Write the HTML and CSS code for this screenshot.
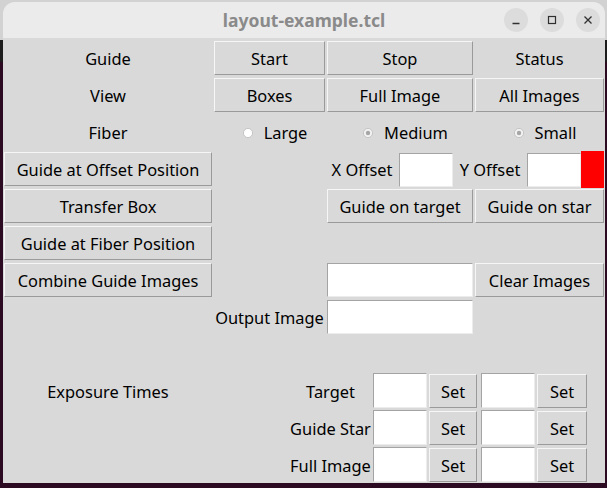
FILE: index.html
```html
<!DOCTYPE html>
<html>
<head>
<meta charset="utf-8">
<link rel="stylesheet" href="styles.css">
</head>
<body>
<div class="window">
  <div class="titlebar">
    <span></span>
    <span class="title">layout-example.tcl</span>
    <div class="controls">
      <span class="ctl"><svg width="12" height="12" viewBox="0 0 12 12"><path d="M2.5 9.5h7" stroke="#303030" stroke-width="1.3"/></svg></span>
      <span class="ctl"><svg width="12" height="12" viewBox="0 0 12 12"><rect x="2.5" y="2.5" width="7" height="7" fill="none" stroke="#303030" stroke-width="1.2"/></svg></span>
      <span class="ctl"><svg width="12" height="12" viewBox="0 0 12 12"><path d="M2.5 2.5l7 7M9.5 2.5l-7 7" stroke="#303030" stroke-width="1.3"/></svg></span>
    </div>
  </div>
  <div class="content">
    <div class="lbl">Guide</div>
    <button class="btn">Start</button>
    <button class="btn">Stop</button>
    <div class="lbl">Status</div>

    <div class="lbl">View</div>
    <button class="btn">Boxes</button>
    <button class="btn">Full Image</button>
    <button class="btn">All Images</button>

    <div class="lbl">Fiber</div>
    <div class="radio"><svg class="ind" width="12" height="12" viewBox="0 0 12 12"><circle cx="6" cy="6" r="4.6" fill="#ffffff" stroke="#c4c4c4" stroke-width="1"/></svg>Large</div>
    <div class="radio"><svg class="ind" width="12" height="12" viewBox="0 0 12 12"><circle cx="6" cy="6" r="4.6" fill="#f2f2f2" stroke="#c4c4c4" stroke-width="1"/><circle cx="6" cy="6" r="2.2" fill="#a6a6a6"/></svg>Medium</div>
    <div class="radio"><svg class="ind" width="12" height="12" viewBox="0 0 12 12"><circle cx="6" cy="6" r="4.6" fill="#f2f2f2" stroke="#c4c4c4" stroke-width="1"/><circle cx="6" cy="6" r="2.2" fill="#a6a6a6"/></svg>Small</div>

    <button class="btn">Guide at Offset Position</button>
    <div></div>
    <div class="offset">
      <div class="olbl">X Offset</div>
      <div class="entry oent"></div>
      <div class="olbl olbl2">Y Offset</div>
      <div class="entry oent"></div>
      <div class="red"></div>
    </div>

    <button class="btn">Transfer Box</button>
    <div></div>
    <button class="btn">Guide on target</button>
    <button class="btn">Guide on star</button>

    <button class="btn">Guide at Fiber Position</button>
    <div></div>
    <div></div>
    <div></div>

    <button class="btn">Combine Guide Images</button>
    <div></div>
    <div class="entry wide"></div>
    <button class="btn">Clear Images</button>

    <div></div>
    <div class="lbl">Output Image</div>
    <div class="entry wide"></div>
    <div></div>

    <div></div>
    <div></div>
    <div></div>
    <div></div>

    <div class="lbl">Exposure Times</div>
    <div class="expo">
      <div class="lbl">Target</div>
      <div class="entry small"></div>
      <button class="btn set">Set</button>
      <div class="entry small"></div>
      <button class="btn set2">Set</button>

      <div class="lbl">Guide Star</div>
      <div class="entry small"></div>
      <button class="btn set">Set</button>
      <div class="entry small"></div>
      <button class="btn set2">Set</button>

      <div class="lbl">Full Image</div>
      <div class="entry small"></div>
      <button class="btn set">Set</button>
      <div class="entry small"></div>
      <button class="btn set2">Set</button>
    </div>
  </div>
</div>
</body>
</html>
```

FILE: styles.css
```css
html, body {
  margin: 0;
  padding: 0;
}
body {
  width: 607px;
  height: 488px;
  overflow: hidden;
  background: linear-gradient(to bottom, #d2d2d2 0, #d2d2d2 40px, #1d1d1d 40px, #1d1d1d 62px, #2c0a22 62px);
  font-family: "Noto Sans", "Open Sans", sans-serif;
  font-size: 16.4px;
  color: #000;
}
.window {
  margin: 2px 0 0 3px;
  width: 602px;
  height: 481px;
  border-radius: 12px 12px 0 0;
  overflow: hidden;
  background: #d9d9d9;
}
.titlebar {
  height: 36px;
  background: #ebebeb;
  display: grid;
  grid-template-columns: 1fr auto 1fr;
  align-items: center;
}
.title {
  font-weight: 700;
  font-size: 17.5px;
  color: #8a8a8a;
}
.controls {
  justify-self: end;
  display: flex;
  gap: 12px;
  padding-right: 5px;
}
.ctl {
  width: 24px;
  height: 24px;
  border-radius: 50%;
  background: #dcdcdc;
  display: flex;
  align-items: center;
  justify-content: center;
}
.content {
  display: grid;
  grid-template-columns: 208px 111px 146px 129px;
  grid-template-rows: repeat(12, 37px);
  column-gap: 2px;
  padding: 2px 1px 0 1px;
}
.lbl {
  display: flex;
  align-items: center;
  justify-content: center;
  white-space: nowrap;
}
.btn {
  font: inherit;
  color: #000;
  background: #d9d9d9;
  box-sizing: border-box;
  height: 34px;
  margin: 1px 0 0 0;
  padding: 1px 0 0 0;
  border: 1px solid;
  border-color: #f6f6f6 #9a9a9a #9a9a9a #f6f6f6;
  display: flex;
  align-items: center;
  justify-content: center;
  white-space: nowrap;
}
.entry {
  box-sizing: border-box;
  background: #ffffff;
  border: 1px solid;
  border-color: #a4a4a4 #ececec #ececec #a4a4a4;
}
.wide {
  height: 34px;
  margin-top: 1px;
}
.radio {
  display: flex;
  align-items: center;
  justify-content: center;
  padding-left: 10px;
  gap: 10px;
}
.ind {
  display: block;
}
.offset {
  grid-column: span 2;
  display: flex;
  align-items: flex-start;
}
.olbl {
  width: 70px;
  height: 37px;
  display: flex;
  align-items: center;
  justify-content: center;
  white-space: nowrap;
}
.olbl2 {
  margin-left: 2px;
}
.oent {
  width: 54px;
  height: 34px;
  margin: 2px 0 0 2px;
}
.red {
  width: 23px;
  height: 37px;
  background: #ff0000;
}
.expo {
  grid-column: span 3;
  grid-row: span 3;
  display: grid;
  grid-template-columns: 85px 56px 52px 56px 50px;
  grid-template-rows: repeat(3, 37px);
  padding-left: 74px;
}
.small {
  width: 54px;
  height: 35px;
}
.set {
  width: 48px;
}
.set2 {
  width: 50px;
}
```
